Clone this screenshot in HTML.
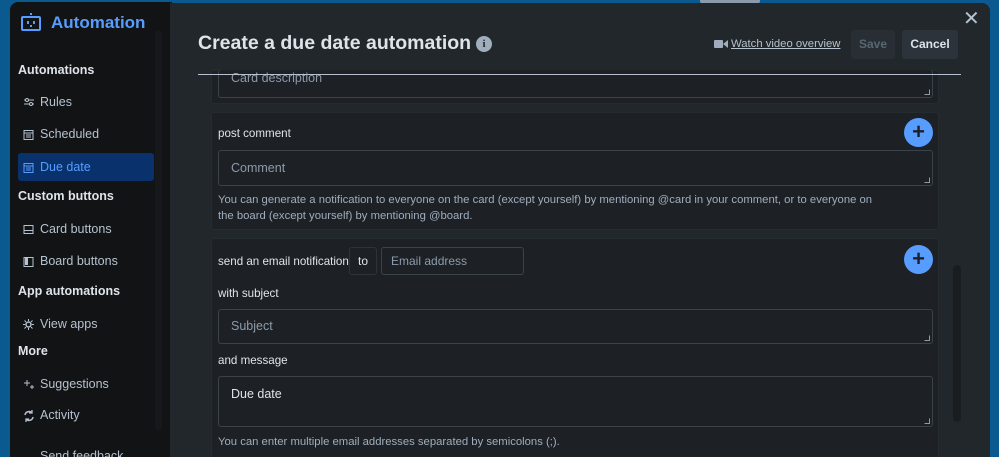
<!DOCTYPE html>
<html><head><meta charset="utf-8"><style>
*{box-sizing:border-box;margin:0;padding:0}
html,body{width:999px;height:457px;overflow:hidden}
body{background:#0b5a8f;font-family:"Liberation Sans",sans-serif;position:relative}
.abs{position:absolute}
#side{left:10px;top:2px;width:162px;height:455px;background:#121315;border-radius:8px 0 0 0}
#side .h{position:absolute;left:8px;color:#dee4ea;font-weight:bold;font-size:12.5px}
#side .it{position:absolute;left:8px;width:136px;height:28px;color:#b6c2cf;font-size:12.5px;padding-left:22px;line-height:28px;border-radius:3px}
#side .it svg{position:absolute;left:5px;top:9px}
#modal{left:170px;top:3px;width:820px;height:454px;background:#22272b;border-radius:0 8px 0 0}
.card{position:absolute;left:211px;width:728px;background:#1d2125;border-radius:3px;border:1px solid #262b30}
.inp{position:absolute;left:218px;width:715px;border:1px solid #3a424a;border-radius:3px;background:#1d2125;color:#8c9bab;font-size:12.5px;padding-left:12px}
.lbl{position:absolute;left:218px;color:#dee4ea;font-size:11.6px}
.help{position:absolute;left:218px;color:#9fadbc;font-size:11.3px;line-height:15.5px}
.plus{position:absolute;left:904px;width:29px;height:29px;border-radius:50%;background:#579dff;color:#1d2125;font-weight:bold;font-size:22px;text-align:center;line-height:28px}
.grip{position:absolute;right:2px;bottom:2px;width:6px;height:6px;border-right:1px solid #8c9bab;border-bottom:1px solid #8c9bab;clip-path:polygon(100% 0,100% 100%,0 100%)}
</style></head><body>
<div class="abs" style="left:700px;top:0;width:60px;height:4px;background:#8c9bab;border-radius:0 0 3px 3px"></div>
<div id="side" class="abs">
 <svg class="abs" style="left:10px;top:11px" width="22" height="18" viewBox="0 0 22 18"><rect x="2" y="4" width="18" height="13" rx="1" fill="none" stroke="#579dff" stroke-width="2"/><rect x="10" y="0" width="2" height="2" fill="#579dff"/><rect x="7" y="8" width="2" height="3" fill="#579dff"/><rect x="13" y="8" width="2" height="3" fill="#579dff"/><rect x="10" y="12" width="2" height="2" fill="#579dff"/></svg>
 <div class="abs" style="left:41px;top:11px;color:#579dff;font-weight:bold;font-size:17px">Automation</div>
 <div class="h" style="top:61px">Automations</div>
 <div class="it" style="top:86px"><svg width="12" height="10"><path d="M1 3h10M1 7h10" stroke="#b6c2cf"/><circle cx="4" cy="3" r="1.5" fill="#121315" stroke="#b6c2cf"/><circle cx="8" cy="7" r="1.5" fill="#121315" stroke="#b6c2cf"/></svg>Rules</div>
 <div class="it" style="top:118px"><svg width="11" height="11"><rect x="1" y="1.5" width="9" height="9" fill="none" stroke="#b6c2cf"/><path d="M1 4h9M3 6h5M3 8h5" stroke="#b6c2cf"/></svg>Scheduled</div>
 <div class="it" style="top:151px;background:#09326c;color:#579dff"><svg width="11" height="11"><rect x="1" y="1.5" width="9" height="9" fill="none" stroke="#579dff"/><path d="M1 4h9M3 6h5M3 8h5" stroke="#579dff"/></svg>Due date</div>
 <div class="h" style="top:187px">Custom buttons</div>
 <div class="it" style="top:213px"><svg width="11" height="11"><rect x="1" y="1.5" width="9" height="8" fill="none" stroke="#b6c2cf"/><path d="M1 6.5h9" stroke="#b6c2cf"/></svg>Card buttons</div>
 <div class="it" style="top:245px"><svg width="11" height="11"><rect x="1" y="1.5" width="9" height="9" fill="none" stroke="#b6c2cf"/><rect x="2" y="2" width="3" height="7" fill="#b6c2cf"/></svg>Board buttons</div>
 <div class="h" style="top:282px">App automations</div>
 <div class="it" style="top:308px"><svg width="11" height="11"><circle cx="5.5" cy="5.5" r="2.5" fill="none" stroke="#b6c2cf" stroke-width="1.5"/><path d="M5.5 0v2M5.5 9v2M0 5.5h2M9 5.5h2M1.5 1.5l1.5 1.5M8 8l1.5 1.5M1.5 9.5L3 8M8 3l1.5-1.5" stroke="#b6c2cf"/></svg>View apps</div>
 <div class="h" style="top:342px">More</div>
 <div class="it" style="top:368px"><svg width="12" height="12"><path d="M4 1v6M1 4h6M9 6v4M7 8h4" stroke="#b6c2cf"/></svg>Suggestions</div>
 <div class="it" style="top:399px"><svg width="12" height="12"><path d="M2 5a4 4 0 0 1 7-2M10 7a4 4 0 0 1-7 2" fill="none" stroke="#b6c2cf" stroke-width="1.5"/><path d="M9 0v3H6M3 12V9h3" fill="none" stroke="#b6c2cf" stroke-width="1.3"/></svg>Activity</div>
 <div class="it" style="top:440px">Send feedback</div>
 <div class="abs" style="left:145px;top:28px;width:7px;height:400px;background:#16181b;border-radius:4px"></div>
</div>
<div id="modal" class="abs"></div>
<div class="abs" style="left:198px;top:32px;color:#dee4ea;font-weight:bold;font-size:19.5px">Create a due date automation</div>
<div class="abs" style="left:476px;top:36px;width:16px;height:16px;border-radius:50%;background:#9fadbc;color:#22272b;font-weight:bold;font-size:11px;text-align:center;line-height:16px;font-family:'Liberation Serif',serif">i</div>
<svg class="abs" style="left:714px;top:39px" width="14" height="10"><rect x="0" y="1" width="9" height="8" rx="1" fill="#9fadbc"/><path d="M9 5l5-4v8z" fill="#9fadbc"/></svg>
<div class="abs" style="left:731px;top:38px;color:#b6c2cf;font-size:11.3px;text-decoration:underline">Watch video overview</div>
<div class="abs" style="left:851px;top:30px;width:44px;height:29px;background:#282e33;border-radius:3px;color:#596773;font-size:12px;font-weight:bold;text-align:center;line-height:29px">Save</div>
<div class="abs" style="left:902px;top:30px;width:56px;height:29px;background:#2c333a;border-radius:3px;color:#dee4ea;font-size:12px;font-weight:bold;text-align:center;line-height:29px">Cancel</div>
<div class="abs" style="left:963px;top:6px;color:#b6c2cf;font-size:20px">✕</div>
<div class="card" style="top:70px;height:34px"></div>
<div class="inp" style="top:70px;height:28px;line-height:16px;border-top:none;color:#8c9bab">Card description<div class="grip"></div></div>
<div class="abs" style="left:198px;top:74px;width:763px;height:1px;background:#b6c2cf"></div>
<div class="card" style="top:112px;height:118px"></div>
<div class="lbl" style="top:127px">post comment</div>
<div class="plus" style="top:118px">+</div>
<div class="inp" style="top:150px;height:36px;line-height:34px">Comment<div class="grip"></div></div>
<div class="help" style="top:193px">You can generate a notification to everyone on the card (except yourself) by mentioning @card in your comment, or to everyone on<br>the board (except yourself) by mentioning @board.</div>
<div class="card" style="top:238px;height:225px"></div>
<div class="lbl" style="top:255px">send an email notification</div>
<div class="abs" style="left:349px;top:247px;width:28px;height:28px;border:1px solid #2c333a;border-radius:3px;color:#dee4ea;font-size:12px;text-align:center;line-height:26px">to</div>
<div class="abs" style="left:381px;top:247px;width:143px;height:28px;border:1px solid #3a424a;border-radius:3px;color:#8c9bab;font-size:12px;padding-left:9px;line-height:26px">Email address</div>
<div class="plus" style="top:245px">+</div>
<div class="lbl" style="top:287px">with subject</div>
<div class="inp" style="top:309px;height:35px;line-height:33px">Subject<div class="grip"></div></div>
<div class="lbl" style="top:354px">and message</div>
<div class="inp" style="top:376px;height:51px;line-height:34px;color:#dee4ea">Due date<div class="grip"></div></div>
<div class="help" style="top:435px">You can enter multiple email addresses separated by semicolons (;).</div>
<div class="abs" style="left:953px;top:265px;width:8px;height:157px;background:#1a1d20;border-radius:4px"></div>
</body></html>
